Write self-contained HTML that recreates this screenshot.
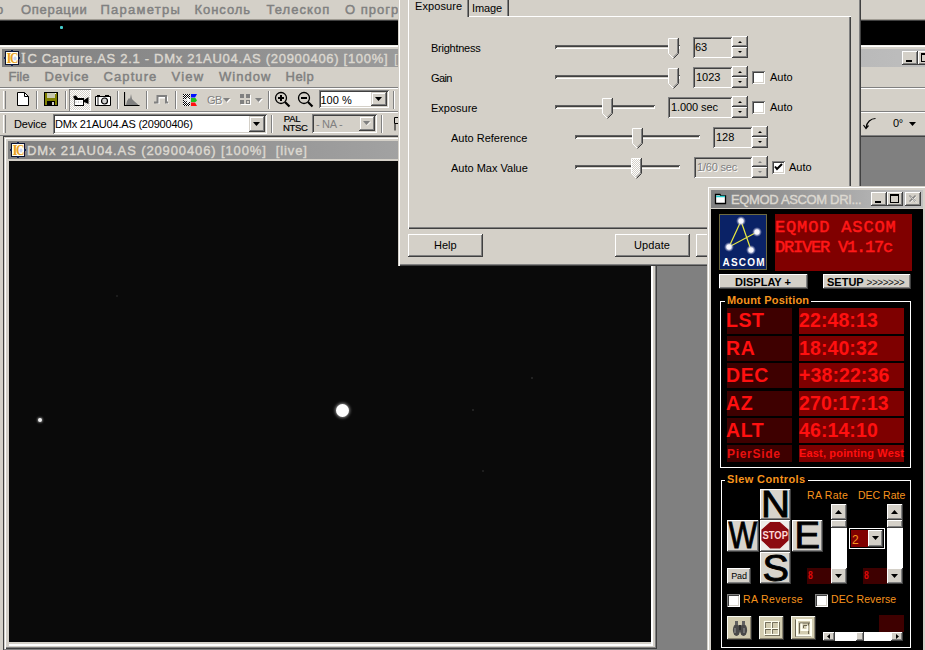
<!DOCTYPE html>
<html><head><meta charset="utf-8">
<style>
*{margin:0;padding:0;box-sizing:border-box}
html,body{width:925px;height:650px;overflow:hidden;background:#d4d0c8}
body{font-family:"Liberation Sans",sans-serif;font-size:11px;color:#000;position:relative}
.a{position:absolute}
.t{position:absolute;white-space:nowrap;line-height:1}
.btn{position:absolute;background:#d4d0c8;box-shadow:inset -1px -1px #404040,inset 1px 1px #fff,inset -2px -2px #808080}
.sunk{position:absolute;box-shadow:inset 1px 1px #808080,inset -1px -1px #fff,inset 2px 2px #404040,inset -2px -2px #d4d0c8}
.sep{position:absolute;width:2px;border-left:1px solid #808080;border-right:1px solid #fff}
.grip{position:absolute;width:3px;border-left:1px solid #fff;border-right:1px solid #808080}
.menu{color:#808080;font-size:13px;letter-spacing:0.6px;-webkit-text-stroke:0.45px #808080}
</style></head><body>

<!-- background app menubar -->
<div class="a" style="left:0;top:0;width:925px;height:20px;background:#d4d0c8"></div>
<div class="t menu" style="left:-4px;top:3px;letter-spacing:0.4px">о</div>
<div class="t menu" style="left:21px;top:3px;letter-spacing:0.7px">Операции</div>
<div class="t menu" style="left:100.5px;top:3px;letter-spacing:1.25px">Параметры</div>
<div class="t menu" style="left:194.5px;top:3px;letter-spacing:0.95px">Консоль</div>
<div class="t menu" style="left:266.5px;top:3px;letter-spacing:1.05px">Телескоп</div>
<div class="t menu" style="left:345px;top:3px;letter-spacing:1px">О програ</div>
<!-- black strip -->
<div class="a" style="left:0;top:19px;width:925px;height:1px;background:#a09c94"></div><div class="a" style="left:0;top:20px;width:925px;height:1px;background:#404040"></div><div class="a" style="left:0;top:21px;width:925px;height:24px;background:#000"></div>
<div class="a" style="left:60px;top:26px;width:3px;height:3px;background:#4cc;border-radius:1px"></div>

<!-- IC Capture main window -->
<div class="a" style="left:0;top:45px;width:925px;height:1px;background:#f0eee8"></div>
<div class="a" style="left:0;top:46px;width:925px;height:1px;background:#fff"></div>
<div class="a" style="left:0;top:47px;width:925px;height:2px;background:#d4d0c8"></div>
<div class="a" style="left:2px;top:49px;width:956px;height:18px;background:linear-gradient(90deg,#808080,#c0c0c0)"></div>
<!-- app icon -->
<svg class="a" style="left:4px;top:50px" width="16" height="16"><rect x="1.5" y="1.5" width="13" height="13" fill="#fffef4" stroke="#0c1430"/><rect x="7" y="0" width="2" height="2" fill="#102050"/><rect x="7" y="14" width="2" height="2" fill="#102050"/><rect x="0" y="7" width="2" height="2" fill="#102050"/><rect x="14" y="7" width="2" height="2" fill="#102050"/><text x="2.6" y="13" font-family="Liberation Serif" font-weight="bold" font-size="14" fill="#e8a020" textLength="5" lengthAdjust="spacingAndGlyphs">I</text><text x="6" y="13" font-family="Liberation Serif" font-weight="bold" font-size="14" fill="#e8a020" textLength="8.5" lengthAdjust="spacingAndGlyphs">C</text><ellipse cx="11" cy="8.5" rx="1.6" ry="2" fill="#c8d4f0"/></svg>
<div class="t" style="left:20px;top:52px;font-size:13px;color:#dcd8d0;-webkit-text-stroke:0.4px #dcd8d0;letter-spacing:0.7px"><span style="font-family:'Liberation Serif',serif;font-size:14px;letter-spacing:1.7px;margin-left:1px">I</span>C Capture.AS 2.1 - DMx 21AU04.AS (20900406) [100%]</div>
<div class="t" style="left:394px;top:52px;font-size:13px;color:#dcd8d0">[</div>
<!-- title buttons (right) -->
<div class="btn" style="left:902px;top:51px;width:16px;height:14px"></div>
<div class="a" style="left:906px;top:60px;width:6px;height:2px;background:#000"></div>
<div class="btn" style="left:918px;top:51px;width:16px;height:14px"></div>
<div class="a" style="left:921px;top:53px;width:9px;height:9px;border:1px solid #000;border-top-width:2px"></div>

<!-- menubar -->
<div class="t menu" style="left:8.5px;top:70px;letter-spacing:0px">File</div>
<div class="t menu" style="left:44.5px;top:70px;letter-spacing:0.85px">Device</div>
<div class="t menu" style="left:103.5px;top:70px;letter-spacing:1.1px">Capture</div>
<div class="t menu" style="left:171.5px;top:70px;letter-spacing:1.2px">View</div>
<div class="t menu" style="left:219px;top:70px;letter-spacing:1.05px">Window</div>
<div class="t menu" style="left:285.5px;top:70px;letter-spacing:0.5px">Help</div>

<!-- toolbar borders -->
<div class="a" style="left:0;top:87px;width:925px;height:1px;background:#808080"></div>
<div class="a" style="left:0;top:88px;width:925px;height:1px;background:#fff"></div>
<div class="a" style="left:0;top:111px;width:925px;height:1px;background:#808080"></div>
<div class="a" style="left:0;top:112px;width:925px;height:1px;background:#fff"></div>
<div class="a" style="left:0;top:135px;width:925px;height:1px;background:#808080"></div>

<!-- toolbars -->
<div class="grip" style="left:3px;top:91px;height:18px"></div>
<svg class="a" style="left:17px;top:92px" width="12" height="14"><path d="M0.5 0.5H7.5L11.5 4.5V13.5H0.5Z" fill="#fff" stroke="#000"/><path d="M7.5 0.5V4.5H11.5" fill="none" stroke="#000"/></svg>
<div class="sep" style="left:36px;top:91px;height:18px"></div>
<div class="sep" style="left:65px;top:91px;height:18px"></div>
<div class="sep" style="left:117px;top:91px;height:18px"></div>
<div class="sep" style="left:146px;top:91px;height:18px"></div>
<div class="sep" style="left:175px;top:91px;height:18px"></div>
<div class="sep" style="left:268px;top:91px;height:18px"></div>
<div class="sep" style="left:393px;top:91px;height:18px"></div>
<svg class="a" style="left:44px;top:92px" width="14" height="14"><rect x="0.5" y="0.5" width="13" height="13" fill="#808000" stroke="#000"/><rect x="3" y="1" width="8" height="5" fill="#c8c8b0"/><rect x="3" y="9" width="8" height="4" fill="#000"/><rect x="8" y="10" width="2" height="3" fill="#d4d0c8"/><rect x="11" y="1" width="1" height="1" fill="#fff"/></svg>
<div class="a" style="left:69px;top:89px;width:22px;height:22px;background:repeating-conic-gradient(#fff 0 25%,#d4d0c8 0 50%) 0 0/2px 2px;box-shadow:inset 1px 1px #808080,inset -1px -1px #fff"></div>
<svg class="a" style="left:73px;top:95px" width="16" height="12"><path d="M0.5 1L3 0.5L5 3H11V11H1.5V4L0.5 3Z" fill="#000"/><rect x="2" y="5" width="8" height="5" fill="#fff"/><path d="M11 5L15.5 2V9L11 7Z" fill="#000"/><path d="M2.5 7h1M5 7h1M7.5 7h1" stroke="#aaa"/></svg>
<svg class="a" style="left:95px;top:94px" width="17" height="12"><path d="M0.5 2.5H15.5V11.5H0.5Z" fill="#fff" stroke="#000" stroke-width="1"/><rect x="2" y="1" width="3" height="2" fill="#000"/><rect x="10" y="1" width="4" height="2" fill="#000"/><rect x="2" y="3" width="2" height="8" fill="#909090"/><circle cx="9.5" cy="7" r="3" fill="#d0d0d0" stroke="#000" stroke-width="1.2"/></svg>
<svg class="a" style="left:124px;top:92px" width="16" height="14"><path d="M2 13L3 9L5 6L6 7L7 2L8 7L10 9L14 12.5V13Z" fill="#808080"/><path d="M0.5 0V13.5H15.5" stroke="#000" fill="none" stroke-width="1.2"/></svg>
<svg class="a" style="left:154px;top:95px" width="15" height="9"><path d="M1 8.5H3.5V1.5H12V8.5H14" stroke="#fff" stroke-width="2" fill="none" transform="translate(1,1)"/><path d="M0 7.5H3.5V1H12V7.5H14" stroke="#808080" stroke-width="2" fill="none"/></svg>
<svg class="a" style="left:183px;top:94px" width="15" height="12"><defs><pattern id="chk" width="2" height="2" patternUnits="userSpaceOnUse"><rect width="2" height="2" fill="#fff"/><rect width="1" height="1" fill="#000"/><rect x="1" y="1" width="1" height="1" fill="#000"/></pattern></defs><rect x="0" y="0" width="7" height="12" fill="url(#chk)"/><path d="M8 0H14L12 3.5H8Z" fill="#0010ff"/><path d="M8 4H12.5L14 6.5L12.5 8H8Z" fill="#20c020"/><path d="M8 8.5H12L14 12H8Z" fill="#ff1010"/><path d="M1 6H6M4 3.5L6.5 6L4 8.5" stroke="#fff" stroke-width="1.5" fill="none"/></svg>
<div class="t" style="left:207px;top:95px;font-size:11px;color:#808080;text-shadow:1px 1px #fff;letter-spacing:-0.5px">GB</div>
<svg class="a" style="left:223px;top:98px" width="9" height="6"><path d="M1 1H8L4.5 5Z" fill="#fff"/><path d="M0 0H7L3.5 4Z" fill="#808080"/></svg>
<svg class="a" style="left:240px;top:94px" width="12" height="12"><rect x="0" y="0" width="4" height="4" fill="#808080"/><rect x="6" y="0" width="4" height="4" fill="#808080"/><rect x="0" y="6" width="4" height="4" fill="#808080"/><rect x="6.5" y="6.5" width="3" height="3" fill="none" stroke="#808080"/><path d="M1 10.5H11M10.5 1V11" stroke="#fff"/></svg>
<svg class="a" style="left:255px;top:98px" width="9" height="6"><path d="M1 1H8L4.5 5Z" fill="#fff"/><path d="M0 0H7L3.5 4Z" fill="#808080"/></svg>
<svg class="a" style="left:274px;top:91px" width="18" height="17"><circle cx="7" cy="7" r="5.5" fill="none" stroke="#000" stroke-width="1.3"/><path d="M4 7H10M7 4V10" stroke="#000" stroke-width="2"/><path d="M11 11L15.5 15.5" stroke="#000" stroke-width="2.2"/></svg>
<svg class="a" style="left:297px;top:91px" width="18" height="17"><circle cx="7" cy="7" r="5.5" fill="none" stroke="#000" stroke-width="1.3"/><path d="M4 7H10" stroke="#000" stroke-width="2"/><path d="M11 11L15.5 15.5" stroke="#000" stroke-width="2.2"/></svg>
<div class="sunk" style="left:319px;top:90px;width:70px;height:18px;background:#fff"></div><div class="btn" style="left:371px;top:92px;width:16px;height:14px;box-shadow:inset -1px -1px #404040,inset 1px 1px #d4d0c8,inset -2px -2px #808080,inset 2px 2px #fff"></div><svg class="a" style="left:375px;top:97px" width="8" height="5"><path d="M0 0H7L3.5 4Z" fill="#000"/></svg>
<div class="t" style="left:320.5px;top:95px;letter-spacing:0px">100 %</div>
<div class="grip" style="left:3px;top:115px;height:18px"></div>
<div class="t" style="left:14px;top:119px;letter-spacing:-0.2px">Device</div>
<div class="sunk" style="left:53px;top:114px;width:214px;height:20px;background:#fff"></div><div class="btn" style="left:249px;top:116px;width:16px;height:16px;box-shadow:inset -1px -1px #404040,inset 1px 1px #d4d0c8,inset -2px -2px #808080,inset 2px 2px #fff"></div><svg class="a" style="left:253px;top:122px" width="8" height="5"><path d="M0 0H7L3.5 4Z" fill="#000"/></svg>
<div class="t" style="left:55px;top:119px;letter-spacing:-0.2px">DMx 21AU04.AS (20900406)</div>
<div class="sep" style="left:271px;top:115px;height:18px"></div>
<div class="t" style="left:283px;top:115px;font-size:9.5px;line-height:8.5px;text-align:center;width:18px;letter-spacing:-0.3px;-webkit-text-stroke:0.2px #000">PAL<br>NTSC</div>
<div class="sunk" style="left:312px;top:114px;width:65px;height:19px;background:#d4d0c8"></div><div class="btn" style="left:359px;top:116px;width:16px;height:15px;box-shadow:inset -1px -1px #404040,inset 1px 1px #d4d0c8,inset -2px -2px #808080,inset 2px 2px #fff"></div><svg class="a" style="left:363px;top:121px" width="8" height="5"><path d="M0 0H7L3.5 4Z" fill="#808080"/><path d="M4 4.5L8 0.5" stroke="#fff"/></svg>
<div class="t" style="left:316px;top:119px;color:#808080;letter-spacing:-0.3px">- NA -</div>
<div class="sep" style="left:381px;top:115px;height:18px"></div>
<svg class="a" style="left:394px;top:117px" width="6" height="14"><path d="M0.5 0.5H5M0.5 0.5V6.5H5M1 7V13.5" stroke="#000" fill="none"/></svg>
<svg class="a" style="left:863px;top:117px" width="14" height="13"><path d="M12.5 1.5C8 1.5 3.5 5 3 11" stroke="#000" fill="none" stroke-width="1.2"/><path d="M0.5 8L3 11.5L5.5 8.5" stroke="#000" fill="none" stroke-width="1.2"/></svg>
<div class="t" style="left:893px;top:118px;letter-spacing:-0.3px">0°</div>
<svg class="a" style="left:909px;top:122px" width="8" height="5"><path d="M0 0H7L3.5 4Z" fill="#000"/></svg>

<!-- MDI client -->
<div class="a" style="left:3px;top:136px;width:922px;height:514px;background:#808080"></div>
<div class="a" style="left:3px;top:136px;width:922px;height:1px;background:#404040"></div>
<div class="a" style="left:3px;top:136px;width:1px;height:514px;background:#404040"></div>

<!-- MDI child window -->
<div class="a" style="left:4px;top:137px;width:653px;height:512px;background:#d4d0c8;box-shadow:inset 1px 1px #d4d0c8,inset 2px 2px #fff,inset -1px -1px #404040,inset -2px -2px #808080"></div>
<div class="a" style="left:8px;top:141px;width:645px;height:18px;background:linear-gradient(90deg,#808080,#b8b8b8)"></div>
<svg class="a" style="left:10px;top:142px" width="16" height="16"><rect x="1.5" y="1.5" width="13" height="13" fill="#fffef4" stroke="#0c1430"/><rect x="7" y="0" width="2" height="2" fill="#102050"/><rect x="7" y="14" width="2" height="2" fill="#102050"/><rect x="0" y="7" width="2" height="2" fill="#102050"/><rect x="14" y="7" width="2" height="2" fill="#102050"/><text x="2.6" y="13" font-family="Liberation Serif" font-weight="bold" font-size="14" fill="#e8a020" textLength="5" lengthAdjust="spacingAndGlyphs">I</text><text x="6" y="13" font-family="Liberation Serif" font-weight="bold" font-size="14" fill="#e8a020" textLength="8.5" lengthAdjust="spacingAndGlyphs">C</text><ellipse cx="11" cy="8.5" rx="1.6" ry="2" fill="#c8d4f0"/></svg>
<div class="t" style="left:27px;top:144px;font-size:13px;color:#dcd8d0;-webkit-text-stroke:0.4px #dcd8d0;letter-spacing:0.88px">DMx 21AU04.AS (20900406) [100%]&nbsp; [live]</div>
<!-- image -->
<div class="a" style="left:9px;top:161px;width:642px;height:481px;background:#0a0a0a"></div>
<div class="a" style="left:651px;top:160px;width:2px;height:486px;background:#fff"></div>
<div class="a" style="left:9px;top:644px;width:644px;height:2px;background:#fff"></div>
<div class="a" style="left:336px;top:404px;width:13px;height:13px;border-radius:50%;background:#fff;box-shadow:0 0 3px 1px rgba(255,255,255,.5)"></div>
<div class="a" style="left:37.5px;top:417.5px;width:4px;height:4px;border-radius:50%;background:#eee;box-shadow:0 0 2px 1px rgba(255,255,255,.35)"></div>

<div class="a" style="left:531px;top:377px;width:2px;height:2px;background:#222"></div>
<div class="a" style="left:472px;top:409px;width:2px;height:2px;background:#222"></div>
<div class="a" style="left:482px;top:470px;width:2px;height:2px;background:#1e1e1e"></div>
<div class="a" style="left:116px;top:295px;width:2px;height:2px;background:#1c1c1c"></div>
<!-- ===== Properties dialog ===== -->
<div class="a" style="left:398px;top:0;width:463px;height:266px;background:#d4d0c8;box-shadow:inset 1px 0 #d4d0c8,inset 2px 0 #fff,inset -1px -1px #404040,inset -2px -2px #808080"></div>
<!-- tab panel -->
<div class="a" style="left:408px;top:16px;width:443px;height:213px;box-shadow:inset 1px 1px #fff,inset -1px -1px #404040,inset -2px -2px #808080"></div>
<!-- selected tab Exposure -->
<div class="a" style="left:408px;top:0;width:61px;height:17px;background:#d4d0c8;box-shadow:inset 1px 0 #fff,inset -1px 0 #404040,inset -2px 0 #808080"></div>
<div class="t" style="left:415px;top:1px;letter-spacing:0.1px">Exposure</div>
<!-- Image tab -->
<div class="a" style="left:469px;top:0;width:40px;height:16px;box-shadow:inset -1px 0 #404040,inset -2px 0 #808080"></div>
<div class="t" style="left:472px;top:3px;letter-spacing:-0.1px">Image</div>
<div class="a" style="left:469px;top:16px;width:380px;height:1px;background:#fff"></div>

<!-- labels -->
<div class="t" style="left:431px;top:43px;letter-spacing:-0.25px">Brightness</div>
<div class="t" style="left:431px;top:73px;letter-spacing:-0.6px">Gain</div>
<div class="t" style="left:431px;top:103px;letter-spacing:0px">Exposure</div>
<div class="t" style="left:451px;top:133px;letter-spacing:0px">Auto Reference</div>
<div class="t" style="left:451px;top:163px;letter-spacing:0px">Auto Max Value</div>

<!-- slider tracks -->
<div class="a" style="left:555px;top:45px;width:125px;height:4px;background:#d4d0c8;box-shadow:inset 1px 1px #606060,inset -1px -1px #fff,inset 2px 2px #404040"></div>
<div class="a" style="left:555px;top:75px;width:125px;height:4px;background:#d4d0c8;box-shadow:inset 1px 1px #606060,inset -1px -1px #fff,inset 2px 2px #404040"></div>
<div class="a" style="left:555px;top:105px;width:100px;height:4px;background:#d4d0c8;box-shadow:inset 1px 1px #606060,inset -1px -1px #fff,inset 2px 2px #404040"></div>
<div class="a" style="left:575px;top:135px;width:125px;height:4px;background:#d4d0c8;box-shadow:inset 1px 1px #606060,inset -1px -1px #fff,inset 2px 2px #404040"></div>
<div class="a" style="left:575px;top:165px;width:105px;height:4px;background:#d4d0c8;box-shadow:inset 1px 1px #606060,inset -1px -1px #fff,inset 2px 2px #404040"></div>

<!-- slider thumbs -->
<svg class="a" style="left:668px;top:38px" width="11" height="21"><path d="M0.5 15.5V0.5H10.5V15.5L5.5 20.5Z" fill="#d4d0c8"/><path d="M0.5 15.5V0.5H9.5" stroke="#fff" fill="none"/><path d="M10.5 0V15.5L5.5 20.5" stroke="#404040" fill="none"/><path d="M9.5 1V15L5.5 19" stroke="#808080" fill="none"/><path d="M0.5 15.5L5 20" stroke="#fff" fill="none"/></svg>
<svg class="a" style="left:668px;top:68px" width="11" height="21"><path d="M0.5 15.5V0.5H10.5V15.5L5.5 20.5Z" fill="#d4d0c8"/><path d="M0.5 15.5V0.5H9.5" stroke="#fff" fill="none"/><path d="M10.5 0V15.5L5.5 20.5" stroke="#404040" fill="none"/><path d="M9.5 1V15L5.5 19" stroke="#808080" fill="none"/><path d="M0.5 15.5L5 20" stroke="#fff" fill="none"/></svg>
<svg class="a" style="left:602px;top:98px" width="11" height="21"><path d="M0.5 15.5V0.5H10.5V15.5L5.5 20.5Z" fill="#d4d0c8"/><path d="M0.5 15.5V0.5H9.5" stroke="#fff" fill="none"/><path d="M10.5 0V15.5L5.5 20.5" stroke="#404040" fill="none"/><path d="M9.5 1V15L5.5 19" stroke="#808080" fill="none"/><path d="M0.5 15.5L5 20" stroke="#fff" fill="none"/></svg>
<svg class="a" style="left:632px;top:128px" width="11" height="21"><path d="M0.5 15.5V0.5H10.5V15.5L5.5 20.5Z" fill="#d4d0c8"/><path d="M0.5 15.5V0.5H9.5" stroke="#fff" fill="none"/><path d="M10.5 0V15.5L5.5 20.5" stroke="#404040" fill="none"/><path d="M9.5 1V15L5.5 19" stroke="#808080" fill="none"/><path d="M0.5 15.5L5 20" stroke="#fff" fill="none"/></svg>
<svg class="a" style="left:631px;top:158px" width="11" height="21"><defs><pattern id="dth" width="2" height="2" patternUnits="userSpaceOnUse"><rect width="2" height="2" fill="#fff"/><rect width="1" height="1" fill="#d4d0c8"/><rect x="1" y="1" width="1" height="1" fill="#d4d0c8"/></pattern></defs><path d="M0.5 15.5V0.5H10.5V15.5L5.5 20.5Z" fill="url(#dth)"/><path d="M0.5 15.5V0.5H9.5" stroke="#fff" fill="none"/><path d="M10.5 0V15.5L5.5 20.5" stroke="#404040" fill="none"/><path d="M9.5 1V15L5.5 19" stroke="#808080" fill="none"/><path d="M0.5 15.5L5 20" stroke="#fff" fill="none"/></svg>

<!-- edit boxes -->
<div class="sunk" style="left:693px;top:37px;width:39px;height:21px;background:#d4d0c8"></div>
<div class="t" style="left:695px;top:42px">63</div>
<div class="sunk" style="left:693px;top:67px;width:39px;height:21px;background:#d4d0c8"></div>
<div class="t" style="left:696px;top:72px">1023</div>
<div class="sunk" style="left:668px;top:97px;width:64px;height:21px;background:#d4d0c8"></div>
<div class="t" style="left:671px;top:102px;letter-spacing:-0.1px">1.000 sec</div>
<div class="sunk" style="left:713px;top:127px;width:39px;height:21px;background:#d4d0c8"></div>
<div class="t" style="left:716px;top:132px">128</div>
<div class="sunk" style="left:694px;top:157px;width:58px;height:21px;background:#d4d0c8"></div>
<div class="t" style="left:697px;top:162px;color:#808080;letter-spacing:-0.2px;text-shadow:1px 1px 0 #fff">1/60 sec</div>

<!-- spinners -->
<div class="btn" style="left:732px;top:36px;width:16px;height:11px"></div><svg class="a" style="left:732px;top:36px" width="16" height="11"><path d="M6.5 6.5h3M7.5 5.5h1" stroke="#000" fill="none"/></svg><div class="btn" style="left:732px;top:47px;width:16px;height:11px"></div><svg class="a" style="left:732px;top:47px" width="16" height="11"><path d="M6.5 4.5h3M7.5 5.5h1" stroke="#000" fill="none"/></svg><div class="btn" style="left:732px;top:66px;width:16px;height:11px"></div><svg class="a" style="left:732px;top:66px" width="16" height="11"><path d="M6.5 6.5h3M7.5 5.5h1" stroke="#000" fill="none"/></svg><div class="btn" style="left:732px;top:77px;width:16px;height:11px"></div><svg class="a" style="left:732px;top:77px" width="16" height="11"><path d="M6.5 4.5h3M7.5 5.5h1" stroke="#000" fill="none"/></svg><div class="btn" style="left:732px;top:96px;width:16px;height:11px"></div><svg class="a" style="left:732px;top:96px" width="16" height="11"><path d="M6.5 6.5h3M7.5 5.5h1" stroke="#000" fill="none"/></svg><div class="btn" style="left:732px;top:107px;width:16px;height:11px"></div><svg class="a" style="left:732px;top:107px" width="16" height="11"><path d="M6.5 4.5h3M7.5 5.5h1" stroke="#000" fill="none"/></svg><div class="btn" style="left:752px;top:126px;width:16px;height:11px"></div><svg class="a" style="left:752px;top:126px" width="16" height="11"><path d="M6.5 6.5h3M7.5 5.5h1" stroke="#000" fill="none"/></svg><div class="btn" style="left:752px;top:137px;width:16px;height:11px"></div><svg class="a" style="left:752px;top:137px" width="16" height="11"><path d="M6.5 4.5h3M7.5 5.5h1" stroke="#000" fill="none"/></svg><div class="btn" style="left:752px;top:156px;width:16px;height:11px"></div><svg class="a" style="left:752px;top:156px" width="16" height="11"><path d="M6.5 6.5h3M7.5 5.5h1" stroke="#808080" fill="none"/></svg><div class="btn" style="left:752px;top:167px;width:16px;height:11px"></div><svg class="a" style="left:752px;top:167px" width="16" height="11"><path d="M6.5 4.5h3M7.5 5.5h1" stroke="#808080" fill="none"/></svg>

<!-- checkboxes -->
<div class="sunk" style="left:752px;top:71px;width:13px;height:13px;background:#fff"></div>
<div class="t" style="left:770px;top:72px">Auto</div>
<div class="sunk" style="left:752px;top:101px;width:13px;height:13px;background:#fff"></div>
<div class="t" style="left:770px;top:102px">Auto</div>
<div class="sunk" style="left:772px;top:161px;width:13px;height:13px;background:#fff"></div>
<svg class="a" style="left:772px;top:161px" width="13" height="13"><path d="M3 5.5L5 8L10 3" stroke="#000" stroke-width="2" fill="none"/></svg>
<div class="t" style="left:789px;top:162px">Auto</div>

<!-- buttons -->
<div class="btn" style="left:408px;top:234px;width:75px;height:23px"></div>
<div class="t" style="left:434px;top:240px;letter-spacing:0px">Help</div>
<div class="btn" style="left:615px;top:234px;width:75px;height:23px"></div>
<div class="t" style="left:634px;top:240px;letter-spacing:0.1px">Update</div>
<div class="btn" style="left:696px;top:234px;width:75px;height:23px"></div>

<!-- EQMOD -->
<div class="a" style="left:707px;top:186px;width:220px;height:470px;background:#d4d0c8;box-shadow:inset 1px 1px #d4d0c8,inset 2px 2px #fff"></div>
<div class="a" style="left:711px;top:190px;width:212px;height:18px;background:linear-gradient(90deg,#808080,#c0c0c0)"></div>
<svg class="a" style="left:714px;top:193px" width="13" height="12"><path d="M1.5 1.5H6L7 3H11.5V10.5H1.5Z" fill="#fff" stroke="#000" stroke-width="1.3"/><path d="M2 3.5H11" stroke="#2cc" stroke-width="1.5"/></svg>
<div class="t" style="left:731px;top:193px;font-size:13px;color:#dcd8d0;-webkit-text-stroke:0.4px #dcd8d0;letter-spacing:-0.35px">EQMOD ASCOM DRI...</div>
<div class="btn" style="left:871px;top:192px;width:16px;height:14px"></div>
<div class="a" style="left:875px;top:201px;width:6px;height:2px;background:#000"></div>
<div class="btn" style="left:887px;top:192px;width:16px;height:14px"></div>
<div class="a" style="left:890px;top:194px;width:9px;height:9px;border:1px solid #000;border-top-width:2px"></div>
<div class="btn" style="left:905px;top:192px;width:16px;height:14px"></div>
<svg class="a" style="left:905px;top:192px" width="16" height="14"><path d="M4.5 3.5L10.5 9.5M10.5 3.5L4.5 9.5" stroke="#808080" stroke-width="1.4"/><path d="M5.5 4.5L11.5 10.5M11.5 4.5L5.5 10.5" stroke="#fff" stroke-width="1" opacity="0.6"/></svg>
<div class="a" style="left:711px;top:209px;width:212px;height:441px;background:#000"></div>
<div class="a" style="left:719px;top:214px;width:48px;height:56px;background:#0a2266;border:1px solid #6e6a40"></div>
<svg class="a" style="left:719px;top:214px" width="48" height="56"><defs><radialGradient id="st"><stop offset="0" stop-color="#fff"/><stop offset="0.45" stop-color="#f4f4ff"/><stop offset="1" stop-color="#8890c0" stop-opacity="0"/></radialGradient></defs><path d="M22 7L10 33L38 18M22 7L32 36" stroke="#e8e840" stroke-width="1.2" fill="none"/><circle cx="22" cy="7" r="5" fill="url(#st)"/><circle cx="38" cy="18" r="5" fill="url(#st)"/><circle cx="10" cy="33" r="5" fill="url(#st)"/><circle cx="32" cy="36" r="5" fill="url(#st)"/></svg>
<div class="t" style="left:722.5px;top:257px;font:bold 10px 'Liberation Sans',sans-serif;color:#fff;letter-spacing:1.2px">ASCOM</div>
<div class="a" style="left:775px;top:214px;width:137px;height:57px;background:#800000"></div>
<div class="t" style="left:775px;top:218px;font:17px 'Liberation Mono',monospace;color:#ff1818;-webkit-text-stroke:0.5px #ff1818;letter-spacing:0.85px">EQMOD ASCOM</div>
<div class="t" style="left:775px;top:238px;font:17px 'Liberation Mono',monospace;color:#ff1818;-webkit-text-stroke:0.5px #ff1818;letter-spacing:-1.2px">DRIVER V1.17c</div>
<div class="btn" style="left:719px;top:274px;width:89px;height:15px"></div>
<div class="t" style="left:735px;top:276px;font:bold 11px 'Liberation Sans',sans-serif;letter-spacing:0px">DISPLAY +</div>
<div class="btn" style="left:823px;top:274px;width:88px;height:15px"></div>
<div class="t" style="left:827px;top:276px;font:bold 11px 'Liberation Sans',sans-serif;letter-spacing:0px">SETUP <span style="font-weight:normal;font-size:10px;color:#202020;letter-spacing:-0.45px">&gt;&gt;&gt;&gt;&gt;&gt;&gt;</span></div>
<div class="a" style="left:720px;top:301px;width:191px;height:167px;border:1px solid #fff"></div>
<div class="t" style="left:725px;top:294px;background:#000;padding:0 2px;font:bold 11px 'Liberation Sans',sans-serif;color:#f7941d;letter-spacing:0.2px">Mount Position</div>
<div class="a" style="left:727px;top:308px;width:65px;height:26px;background:#3e0000"></div>
<div class="a" style="left:799px;top:308px;width:105px;height:26px;background:#7e0000"></div>
<div class="t" style="left:726px;top:309px;font:bold 19.5px 'Liberation Sans',sans-serif;color:#ff1010;letter-spacing:0.6px">LST</div>
<div class="t" style="left:799px;top:309px;font:bold 19.5px 'Liberation Sans',sans-serif;color:#ff1010;letter-spacing:0.1px">22:48:13</div>
<div class="a" style="left:727px;top:336px;width:65px;height:25px;background:#3e0000"></div>
<div class="a" style="left:799px;top:336px;width:105px;height:25px;background:#7e0000"></div>
<div class="t" style="left:726px;top:337px;font:bold 19.5px 'Liberation Sans',sans-serif;color:#ff1010;letter-spacing:0.6px">RA</div>
<div class="t" style="left:799px;top:337px;font:bold 19.5px 'Liberation Sans',sans-serif;color:#ff1010;letter-spacing:0.1px">18:40:32</div>
<div class="a" style="left:727px;top:363px;width:65px;height:25px;background:#3e0000"></div>
<div class="a" style="left:799px;top:363px;width:105px;height:25px;background:#7e0000"></div>
<div class="t" style="left:726px;top:364px;font:bold 19.5px 'Liberation Sans',sans-serif;color:#ff1010;letter-spacing:0.6px">DEC</div>
<div class="t" style="left:799px;top:364px;font:bold 19.5px 'Liberation Sans',sans-serif;color:#ff1010;letter-spacing:0.1px">+38:22:36</div>
<div class="a" style="left:727px;top:391px;width:65px;height:25px;background:#3e0000"></div>
<div class="a" style="left:799px;top:391px;width:105px;height:25px;background:#7e0000"></div>
<div class="t" style="left:726px;top:392px;font:bold 19.5px 'Liberation Sans',sans-serif;color:#ff1010;letter-spacing:0.6px">AZ</div>
<div class="t" style="left:799px;top:392px;font:bold 19.5px 'Liberation Sans',sans-serif;color:#ff1010;letter-spacing:0.1px">270:17:13</div>
<div class="a" style="left:727px;top:418px;width:65px;height:25px;background:#3e0000"></div>
<div class="a" style="left:799px;top:418px;width:105px;height:25px;background:#7e0000"></div>
<div class="t" style="left:726px;top:419px;font:bold 19.5px 'Liberation Sans',sans-serif;color:#ff1010;letter-spacing:0.6px">ALT</div>
<div class="t" style="left:799px;top:419px;font:bold 19.5px 'Liberation Sans',sans-serif;color:#ff1010;letter-spacing:0.1px">46:14:10</div>
<div class="a" style="left:727px;top:445px;width:65px;height:17px;background:#3e0000"></div>
<div class="a" style="left:799px;top:445px;width:105px;height:17px;background:#7e0000"></div>
<div class="t" style="left:727px;top:447px;font:bold 12px 'Liberation Sans',sans-serif;color:#e81010;letter-spacing:0.7px">PierSide</div>
<div class="t" style="left:799px;top:447px;font:bold 11px 'Liberation Sans',sans-serif;color:#ff1010;letter-spacing:0.17px">East, pointing West</div>
<div class="a" style="left:721px;top:480px;width:190px;height:168px;border:1px solid #fff"></div>
<div class="t" style="left:725px;top:473px;background:#000;padding:0 2px;font:bold 11px 'Liberation Sans',sans-serif;color:#f7941d;letter-spacing:0.4px">Slew Controls</div>
<div class="btn" style="left:760px;top:489px;width:31px;height:31px;background:#d8d4cc"></div>
<div class="btn" style="left:727px;top:520px;width:32px;height:32px;background:#d8d4cc"></div>
<div class="btn" style="left:792px;top:520px;width:31px;height:32px;background:#d8d4cc"></div>
<div class="btn" style="left:760px;top:552px;width:31px;height:32px;background:#d8d4cc"></div>
<div class="btn" style="left:760px;top:520px;width:31px;height:32px;background:#eeece8"></div>
<svg class="a" style="left:760px;top:520px" width="31" height="32"><path d="M10.5 2.5H19.5L28 10V20L19.5 28H10.5L2 20V10Z" fill="#8c0a10" stroke="#8c0a10" stroke-width="1.2" stroke-linejoin="round"/><text x="2.5" y="19" font-family="Liberation Sans" font-weight="bold" font-size="10.5" fill="#ffd8d8" textLength="25.5" lengthAdjust="spacingAndGlyphs">STOP</text></svg>
<svg class="a" style="left:720px;top:485px" width="110" height="105"><g font-family="Liberation Sans" font-size="36.5" fill="#000" stroke="#000" stroke-width="0.9"><text x="41" y="31.8" textLength="29" lengthAdjust="spacingAndGlyphs">N</text><text x="8.5" y="63.2" textLength="28.5" lengthAdjust="spacingAndGlyphs">W</text><text x="74.5" y="63.2" textLength="25.5" lengthAdjust="spacingAndGlyphs">E</text><text x="42.5" y="96" textLength="26.5" lengthAdjust="spacingAndGlyphs">S</text></g></svg>
<div class="btn" style="left:727px;top:568px;width:24px;height:16px"></div>
<div class="t" style="left:727px;top:572px;width:24px;text-align:center;font-size:9px;letter-spacing:-0.2px">Pad</div>
<div class="t" style="left:807px;top:490px;font-size:10.5px;color:#f7941d;letter-spacing:0.3px">RA Rate</div>
<div class="t" style="left:858px;top:490px;font-size:10.5px;color:#f7941d;letter-spacing:0px">DEC Rate</div>
<div class="a" style="left:831px;top:504px;width:16px;height:80px;background:#fff"></div>
<div class="btn" style="left:831px;top:504px;width:16px;height:16px"></div>
<svg class="a" style="left:835px;top:510px" width="8" height="5"><path d="M0 4H7L3.5 0Z" fill="#000"/></svg>
<div class="btn" style="left:831px;top:520px;width:16px;height:8px"></div>
<div class="btn" style="left:831px;top:568px;width:16px;height:16px"></div>
<svg class="a" style="left:835px;top:574px" width="8" height="5"><path d="M0 0H7L3.5 4Z" fill="#000"/></svg>
<div class="a" style="left:887px;top:504px;width:16px;height:80px;background:#fff"></div>
<div class="btn" style="left:887px;top:504px;width:16px;height:16px"></div>
<svg class="a" style="left:891px;top:510px" width="8" height="5"><path d="M0 4H7L3.5 0Z" fill="#000"/></svg>
<div class="btn" style="left:887px;top:520px;width:16px;height:8px"></div>
<div class="btn" style="left:887px;top:568px;width:16px;height:16px"></div>
<svg class="a" style="left:891px;top:574px" width="8" height="5"><path d="M0 0H7L3.5 4Z" fill="#000"/></svg>
<div class="a" style="left:849px;top:528px;width:36px;height:21px;background:#000;box-shadow:inset -1px -1px #fff,inset 1px 1px #fff"></div>
<div class="a" style="left:851px;top:530px;width:17px;height:17px;background:#800000"></div>
<div class="t" style="left:852px;top:534px;font-size:12px;color:#f7941d">2</div>
<div class="btn" style="left:868px;top:530px;width:15px;height:17px"></div>
<svg class="a" style="left:872px;top:536px" width="8" height="5"><path d="M0 0H7L3.5 4Z" fill="#000"/></svg>
<div class="a" style="left:807px;top:568px;width:24px;height:16px;background:#3e0000"></div>
<div class="t" style="left:807.5px;top:570px;font:bold 10px 'Liberation Sans',sans-serif;color:#e00808;transform:scaleX(0.85);transform-origin:0 0">8</div>
<div class="a" style="left:863px;top:568px;width:24px;height:16px;background:#3e0000"></div>
<div class="t" style="left:863.5px;top:570px;font:bold 10px 'Liberation Sans',sans-serif;color:#e00808;transform:scaleX(0.85);transform-origin:0 0">8</div>
<div class="sunk" style="left:727px;top:594px;width:13px;height:13px;background:#fff"></div>
<div class="t" style="left:743px;top:594px;font-size:10.5px;color:#f7941d;letter-spacing:0.4px">RA Reverse</div>
<div class="sunk" style="left:815px;top:594px;width:13px;height:13px;background:#fff"></div>
<div class="t" style="left:831px;top:594px;font-size:10.5px;color:#f7941d;letter-spacing:0.1px">DEC Reverse</div>
<div class="btn" style="left:727px;top:616px;width:25px;height:24px;background:#d2ccb0;box-shadow:inset -1px -1px #303030,inset 1px 1px #f8f8f0,inset -2px -2px #8a8470"></div>
<div class="btn" style="left:759px;top:616px;width:25px;height:24px;background:#d2ccb0;box-shadow:inset -1px -1px #303030,inset 1px 1px #f8f8f0,inset -2px -2px #8a8470"></div>
<div class="btn" style="left:791px;top:616px;width:25px;height:24px;background:#d2ccb0;box-shadow:inset -1px -1px #303030,inset 1px 1px #f8f8f0,inset -2px -2px #8a8470"></div>
<svg class="a" style="left:731px;top:619px" width="18" height="18"><ellipse cx="5.5" cy="11" rx="3.6" ry="6" fill="#4a4a4a"/><ellipse cx="12.5" cy="11" rx="3.6" ry="6" fill="#4a4a4a"/><rect x="4" y="2" width="3" height="4" fill="#606060"/><rect x="11" y="2" width="3" height="4" fill="#606060"/><path d="M4 9V14M13 9V14" stroke="#9a9a9a" stroke-width="1"/><rect x="8" y="6" width="2" height="5" fill="#303030"/></svg>
<svg class="a" style="left:763px;top:619px" width="17" height="18"><rect x="2.5" y="3.5" width="14" height="13" fill="none" stroke="#6a6450"/><path d="M9.5 3.5V16.5M2.5 10.5H16.5" stroke="#6a6450"/><rect x="1.5" y="2.5" width="14" height="13" fill="none" stroke="#fffff0" stroke-width="1.2"/><path d="M8.5 2.5V15.5M1.5 9.5H15.5" stroke="#fffff0" stroke-width="1.2"/></svg>
<svg class="a" style="left:791px;top:616px" width="25" height="24"><path d="M4.5 3.5V20.5H20" stroke="#6a6450" stroke-width="1" fill="none"/><rect x="6" y="4" width="14" height="15.5" fill="none" stroke="#fffff4" stroke-width="2"/><path d="M8.5 17.5V7H19M17.5 7V18" stroke="#6a6450" stroke-width="1" fill="none"/><path d="M10.5 7.5V14H16.5V9.5" stroke="#fffff4" stroke-width="2" fill="none"/><path d="M12.5 12V9.5H16" stroke="#6a6450" stroke-width="1" fill="none"/></svg>
<div class="a" style="left:879px;top:615px;width:25px;height:17px;background:#3e0000"></div>
<div class="a" style="left:823px;top:632px;width:80px;height:9px;background:#fff"></div>
<div class="btn" style="left:823px;top:632px;width:12px;height:9px"></div>
<svg class="a" style="left:827px;top:634px" width="4" height="5"><path d="M3 0V5L0 2.5Z" fill="#000"/></svg>
<div class="btn" style="left:856px;top:632px;width:8px;height:9px"></div>
<div class="btn" style="left:891px;top:632px;width:12px;height:9px"></div>
<svg class="a" style="left:896px;top:634px" width="4" height="5"><path d="M0 0V5L3 2.5Z" fill="#000"/></svg>

</body></html>
